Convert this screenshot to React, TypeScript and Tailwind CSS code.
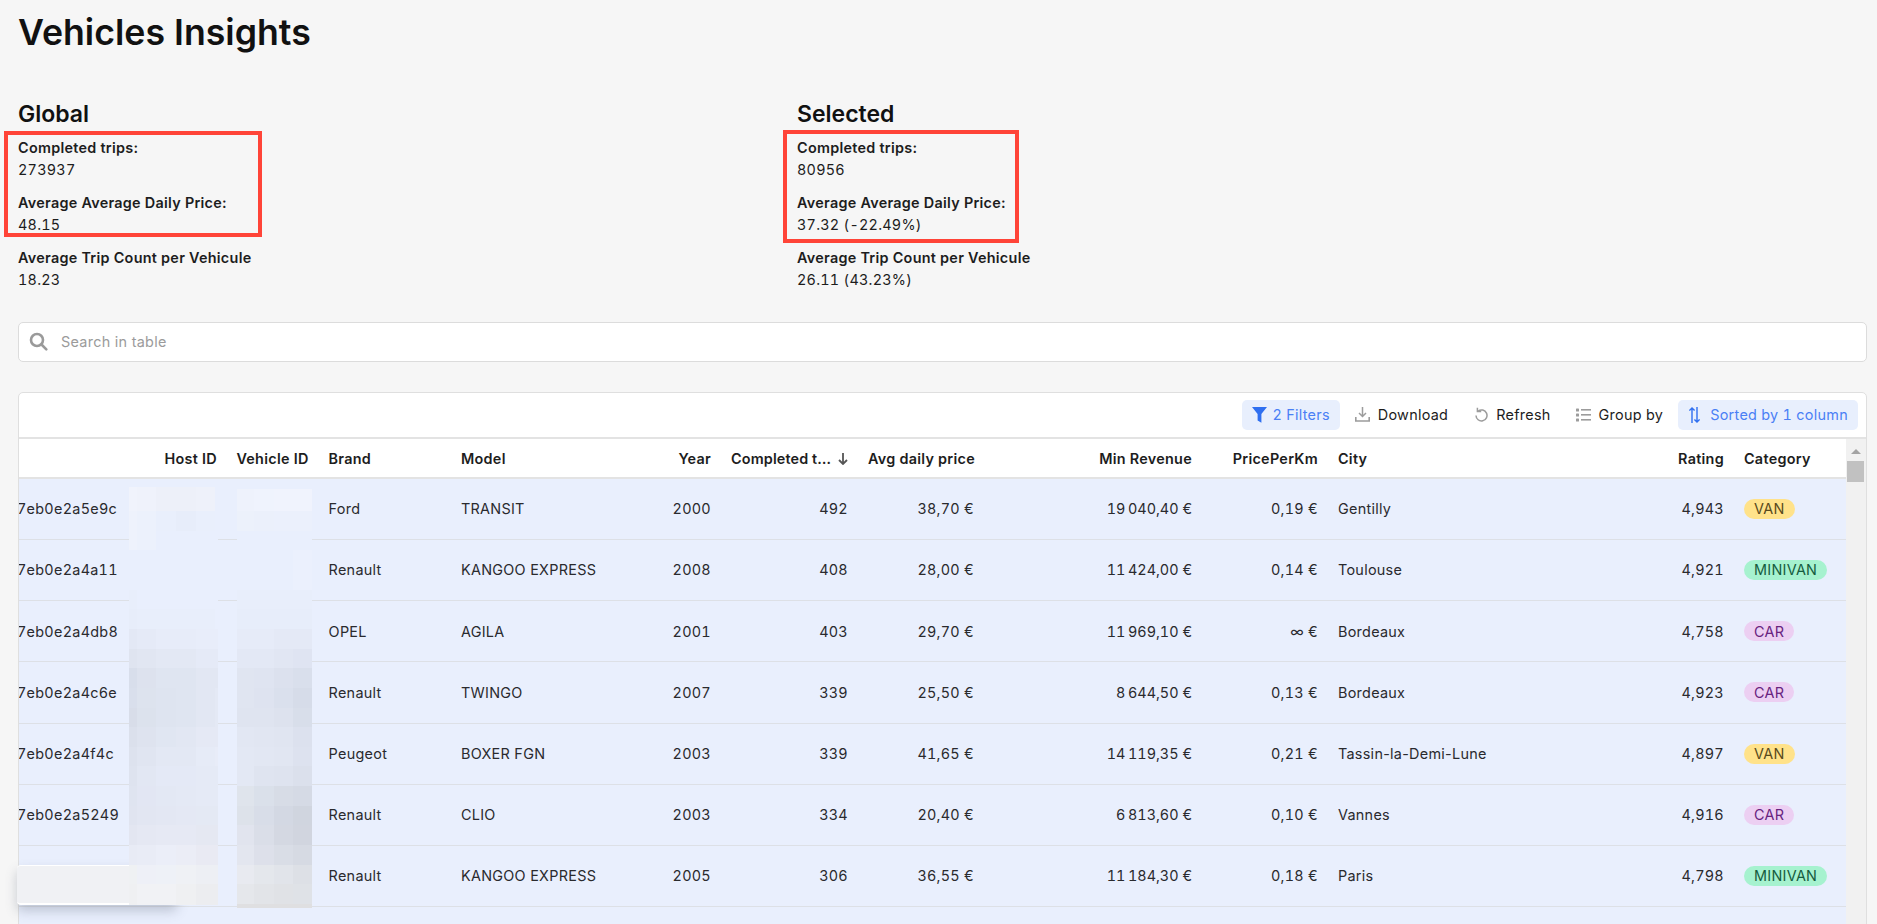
import React from "react";

const COLS =
  "grid grid-cols-[108px_100px_91.6px_132.4px_148px_122px_137px_126px_218px_126px_262px_144px_1fr]";

type Row = {
  id: string;
  brand: string;
  model: string;
  year: string;
  trips: string;
  avg: string;
  rev: string;
  ppk: string;
  city: string;
  rating: string;
  cat: "VAN" | "MINIVAN" | "CAR";
};

const rows: Row[] = [
  { id: "7eb0e2a5e9c", brand: "Ford", model: "TRANSIT", year: "2000", trips: "492", avg: "38,70 €", rev: "19\u202f040,40 €", ppk: "0,19 €", city: "Gentilly", rating: "4,943", cat: "VAN" },
  { id: "7eb0e2a4a11", brand: "Renault", model: "KANGOO EXPRESS", year: "2008", trips: "408", avg: "28,00 €", rev: "11\u202f424,00 €", ppk: "0,14 €", city: "Toulouse", rating: "4,921", cat: "MINIVAN" },
  { id: "7eb0e2a4db8", brand: "OPEL", model: "AGILA", year: "2001", trips: "403", avg: "29,70 €", rev: "11\u202f969,10 €", ppk: "∞ €", city: "Bordeaux", rating: "4,758", cat: "CAR" },
  { id: "7eb0e2a4c6e", brand: "Renault", model: "TWINGO", year: "2007", trips: "339", avg: "25,50 €", rev: "8\u202f644,50 €", ppk: "0,13 €", city: "Bordeaux", rating: "4,923", cat: "CAR" },
  { id: "7eb0e2a4f4c", brand: "Peugeot", model: "BOXER FGN", year: "2003", trips: "339", avg: "41,65 €", rev: "14\u202f119,35 €", ppk: "0,21 €", city: "Tassin-la-Demi-Lune", rating: "4,897", cat: "VAN" },
  { id: "7eb0e2a5249", brand: "Renault", model: "CLIO", year: "2003", trips: "334", avg: "20,40 €", rev: "6\u202f813,60 €", ppk: "0,10 €", city: "Vannes", rating: "4,916", cat: "CAR" },
  { id: "", brand: "Renault", model: "KANGOO EXPRESS", year: "2005", trips: "306", avg: "36,55 €", rev: "11\u202f184,30 €", ppk: "0,18 €", city: "Paris", rating: "4,798", cat: "MINIVAN" },
  { id: "", brand: "", model: "", year: "", trips: "", avg: "", rev: "", ppk: "", city: "", rating: "", cat: "CAR" },
];

function Badge({ cat }: { cat: Row["cat"] }) {
  if (cat === "VAN")
    return <span className="inline-flex h-5 items-center rounded-full bg-[#ffe28a] px-[10px] text-[#594a1c]">VAN</span>;
  if (cat === "MINIVAN")
    return <span className="inline-flex h-5 items-center rounded-full bg-[#a6f2cf] px-[10px] text-[#155c3e]">MINIVAN</span>;
  return <span className="inline-flex h-5 items-center rounded-full bg-[#eccff2] px-[10px] text-[#68237f]">CAR</span>;
}

function Stat({ label, value }: { label: string; value: string }) {
  return (
    <div className="mb-[11.8px] text-[14.4px] leading-[21.6px] text-[#1d1d1d]">
      <div className="font-semibold tracking-[0.28px]">{label}</div>
      <div className="tracking-[0.25px] tabular-nums">{value}</div>
    </div>
  );
}

const HOST_X = [0, 8, 27, 47, 67, 86, 89];
const HOST: string[][] = [
  ["#f0f3fc", "#eff2fb", "#edf0f9", "#edf0f9", "#eef1fa", "#e9effd"],
  ["#eef2fc", "#ecf1fc", "#e9effc", "#e7edfa", "#e9effc", "#e9effd"],
  ["#eef2fc", "#ecf1fc", "#e9effd", "#e9effd", "#e9effd", "#e9effd"],
  ["#e9effd", "#e9effd", "#e9effd", "#e9effd", "#e9effd", "#e9effd"],
  ["#e9effd", "#e9effd", "#e9effd", "#e9effd", "#e9effd", "#e9effd"],
  ["#e8eefb", "#e9effd", "#e9effd", "#e9effd", "#e9effd", "#e9effd"],
  ["#e7edfa", "#e8eefb", "#e8eefb", "#e8eefb", "#e8eefb", "#e9effd"],
  ["#e3e8f5", "#e5eaf7", "#e7ecf9", "#e7ecf9", "#e8edfa", "#e8edfa"],
  ["#dfe4f0", "#e1e6f2", "#e3e8f4", "#e3e8f4", "#e5eaf7", "#e5eaf7"],
  ["#d8deeb", "#dde2ee", "#dfe5f1", "#dfe5f1", "#e2e7f3", "#e2e7f3"],
  ["#d9dfec", "#dde3ee", "#dee4f0", "#dfe5f1", "#e2e7f3", "#e4e9f5"],
  ["#d8dde9", "#dce2ed", "#dee4f0", "#dfe5f1", "#e2e7f3", "#e4e9f5"],
  ["#dbe0ec", "#dee3ef", "#e0e6f2", "#e2e7f3", "#e5e9f5", "#e5e9f5"],
  ["#dde2ee", "#e0e5f1", "#e3e8f4", "#e3e8f4", "#e6ebf7", "#e8ecf8"],
  ["#dee3ef", "#e2e7f3", "#e4e9f6", "#e4e9f6", "#e5eaf6", "#e5eaf6"],
  ["#dfe4f0", "#e2e6f3", "#e3e8f4", "#e4e9f5", "#e5eaf6", "#e5eaf6"],
  ["#e0e4f0", "#e2e6f2", "#e3e7f3", "#e4e8f4", "#e4e9f4", "#e4e9f4"],
  ["#e3e6f1", "#e5e8f3", "#e6e9f4", "#e6e9f4", "#e5e8f2", "#e5e8f2"],
  ["#e8ebf5", "#e9ecf6", "#ebeef8", "#ebedf6", "#e9eaf3", "#e9eaf3"],
  ["#eff1f3", "#eef0f7", "#eef1f7", "#eff1f5", "#edeff4", "#edeff4"],
  ["#eff0f2", "#f1f2f5", "#f1f2f5", "#eff0f2", "#ecedf0", "#ecedf0"],
];
const VEH_X = [0, 17, 37, 56, 75];
const VEH: string[][] = [
  ["#eef2fc", "#eff3fd", "#f0f3fd", "#f0f3fd"],
  ["#ecf1fb", "#ebf0fb", "#ebf0fc", "#ebf0fc"],
  ["#e9effd", "#e9effd", "#e9effd", "#e9effd"],
  ["#e9effd", "#e9effd", "#e9effd", "#ebf0fd"],
  ["#e9effd", "#e9effd", "#e9effd", "#ebf0fd"],
  ["#e8eefb", "#e8eefb", "#e8eefb", "#e8eefb"],
  ["#e7edfa", "#e7edfa", "#e7edfa", "#e7edfa"],
  ["#e6ebf8", "#e6ebf8", "#e4e9f6", "#e4e9f6"],
  ["#e3e8f5", "#e3e8f5", "#e1e6f3", "#dfe4f2"],
  ["#e0e5f1", "#dfe4f1", "#dce1ee", "#d9dfec"],
  ["#e0e5f1", "#dee3f0", "#dae0ed", "#d6dce9"],
  ["#dfe4f0", "#dfe4f0", "#dde2ee", "#d8deea"],
  ["#e2e7f3", "#e1e6f2", "#e0e5f1", "#dce1ee"],
  ["#e3e8f4", "#e2e7f3", "#e1e6f2", "#dde2ef"],
  ["#e3e8f4", "#dfe4f0", "#dee3ef", "#dbe0ec"],
  ["#dfe4ec", "#dae0ea", "#d7dce6", "#d5dae5"],
  ["#dde2ea", "#d8dde8", "#d3d8e3", "#d0d5df"],
  ["#e1e4ee", "#dadee8", "#d4d8e2", "#d1d5df"],
  ["#e3e6ef", "#dde0ea", "#d9dde6", "#d6dae3"],
  ["#e8eaf0", "#e4e7ec", "#e1e4ea", "#dde0e6"],
  ["#e5e7eb", "#e2e4e8", "#e0e2e6", "#dfe2e7"],
  ["#dfdfe1", "#dfdfe1", "#dfdfe1", "#dfdfe1"],
];

const STEP = 19.65;

function Mosaic({ xs, data, top, height, className }: { xs: number[]; data: string[][]; top: number; height: number; className: string }) {
  const w = xs[xs.length - 1];
  return (
    <svg className={className} width={w} height={height} viewBox={`0 0 ${w} ${height}`} shapeRendering="crispEdges">
      {data.map((r, i) =>
        r.map((c, j) => (
          <rect
            key={`${i}-${j}`}
            x={xs[j]}
            y={i === 0 ? 0 : top + i * STEP}
            width={xs[j + 1] - xs[j]}
            height={i === 0 ? top + STEP : STEP + 0.5}
            fill={c}
          />
        ))
      )}
    </svg>
  );
}

export default function App() {
  return (
    <div className="relative h-[924px] overflow-hidden bg-[#f6f6f6] pl-[18px] pr-[10px] font-['Inter',sans-serif] text-[#1d1d1d]">
      <h1 className="pt-[6px] text-[35.7px] font-semibold leading-[52px] text-[#111111]">Vehicles Insights</h1>

      <div className="mt-[43px] flex">
        <div className="w-[779px]">
          <h2 className="mb-[10px] text-[23px] font-semibold leading-[26px] text-[#111111]">Global</h2>
          <Stat label="Completed trips:" value="273937" />
          <Stat label="Average Average Daily Price:" value="48.15" />
          <Stat label="Average Trip Count per Vehicule" value="18.23" />
        </div>
        <div>
          <h2 className="mb-[10px] text-[23px] font-semibold leading-[26px] text-[#111111]">Selected</h2>
          <Stat label="Completed trips:" value="80956" />
          <Stat label="Average Average Daily Price:" value="37.32 (-22.49%)" />
          <Stat label="Average Trip Count per Vehicule" value="26.11 (43.23%)" />
        </div>
      </div>

      <div className="mt-[20px] flex h-[40px] items-center rounded-[5px] border border-[#dcdcdc] bg-white pl-[10px] text-[14.4px] tracking-[0.28px] text-[#9b9b9b]">
        <svg width="19" height="19" viewBox="0 0 19 19" fill="none" stroke="#9a9a9a" strokeWidth="2.6" strokeLinecap="round">
          <circle cx="8" cy="8" r="6" />
          <path d="M12.5 12.5 17.3 17.3" />
        </svg>
        <span className="ml-[13px]">Search in table</span>
      </div>

      <div className="mt-[30px] rounded-t-[5px] border border-[#dfdfdf] bg-white tracking-[0.28px]">
        <div className="flex h-[46px] items-center justify-end gap-[5px] border-b-2 border-[#e3e3e3] pr-[8px] text-[14.4px] tabular-nums">
          <div className="flex h-[30px] items-center gap-[5px] rounded-[5px] bg-[#e8effd] pl-[10px] pr-[10px] text-[#4a80f5]">
            <svg width="15" height="16" viewBox="0 0 15 16" fill="#2f6ff0">
              <path d="M0 0H15L9.4 7V15.8L5.6 13.4V7Z" />
            </svg>
            <span>2 Filters</span>
          </div>
          <div className="flex h-[30px] items-center gap-[8px] px-[10px] text-[#1d1d1d]">
            <svg width="15" height="15" viewBox="0 0 15 15" fill="none" stroke="#9c9c9c" strokeWidth="1.5">
              <path d="M7.5 0V9M4 6l3.5 3.5L11 6" />
              <path d="M0.8 10V14H14.2V10" strokeWidth="1.6" />
            </svg>
            <span>Download</span>
          </div>
          <div className="ml-[2px] flex h-[30px] items-center gap-[8px] px-[10px] text-[#1d1d1d]">
            <svg width="13" height="15" viewBox="0 0 13 15" fill="none" stroke="#9c9c9c" strokeWidth="1.5">
              <path d="M3.2 4A5.5 5.5 0 1 1 1 8.5" />
              <path d="M2.4 0.8V4.6H6.2" />
            </svg>
            <span>Refresh</span>
          </div>
          <div className="flex h-[30px] items-center gap-[8px] px-[10px] text-[#1d1d1d]">
            <svg width="15" height="14" viewBox="0 0 15 14" fill="#9c9c9c">
              <rect x="0" y="0.5" width="3" height="3" rx="0.6" />
              <rect x="0" y="5.5" width="3" height="3" rx="0.6" />
              <rect x="0" y="10.5" width="3" height="3" rx="0.6" />
              <rect x="5" y="1" width="10" height="1.6" />
              <rect x="5" y="6" width="10" height="1.6" />
              <rect x="5" y="11" width="10" height="1.6" />
            </svg>
            <span>Group by</span>
          </div>
          <div className="flex h-[30px] items-center gap-[10px] rounded-[5px] bg-[#e8effd] pl-[11px] pr-[10px] text-[#4a80f5]">
            <svg width="11" height="16" viewBox="0 0 11 16" fill="none" stroke="#2f6ff0" strokeWidth="1.4">
              <path d="M3 16V1M0.4 3.6 3 1 5.6 3.6" />
              <path d="M8 0V15M5.4 12.4 8 15 10.6 12.4" />
            </svg>
            <span>Sorted by 1 column</span>
          </div>
        </div>

        <div className="flex">
          <div className="w-[1827px] text-[14.4px]">
            <div className={`${COLS} h-[40px] items-center border-b-2 border-[#e3e3e3] pt-[2px] font-semibold text-[#1d1d1d]`}>
              <div />
              <div className="whitespace-nowrap px-[10px] text-right">Host ID</div>
              <div className="whitespace-nowrap pr-[10px] text-right">Vehicle ID</div>
              <div className="px-[10px]">Brand</div>
              <div className="px-[10px]">Model</div>
              <div className="px-[10px] text-right">Year</div>
              <div className="flex items-center gap-[4px] px-[10px]">
                <span className="min-w-0 flex-1 truncate tracking-[0.15px]">Completed trips</span>
                <svg className="shrink-0" width="10" height="12" viewBox="0 0 10 12" fill="none" stroke="#555555" strokeWidth="1.8">
                  <path d="M5 0V11M1 7l4 4 4-4" />
                </svg>
              </div>
              <div className="whitespace-nowrap px-[10px] text-right">Avg daily price</div>
              <div className="px-[10px] text-right">Min Revenue</div>
              <div className="px-[10px] text-right">PricePerKm</div>
              <div className="px-[10px]">City</div>
              <div className="px-[10px] text-right">Rating</div>
              <div className="px-[10px]">Category</div>
            </div>

            {rows.map((r, i) => (
              <div
                key={i}
                className={`${COLS} box-border h-[61.15px] items-center border-b border-[#dde0e6] bg-[#e9effd] text-[#2a2a2e] ${
                  i === 1 || i === 5 ? "shadow-[0_1px_0_#ffffff]" : ""
                }`}
              >
                <div className="overflow-hidden whitespace-nowrap tabular-nums [text-indent:-2px]">{r.id}</div>
                <div />
                <div />
                <div className="px-[10px]">{r.brand}</div>
                <div className="whitespace-nowrap px-[10px]">{r.model}</div>
                <div className="px-[10px] text-right tabular-nums">{r.year}</div>
                <div className="px-[10px] text-right tabular-nums">{r.trips}</div>
                <div className="px-[10px] text-right tabular-nums">{r.avg}</div>
                <div className="px-[10px] text-right tabular-nums">{r.rev}</div>
                <div className="px-[10px] text-right tabular-nums">{r.ppk}</div>
                <div className="px-[10px]">{r.city}</div>
                <div className="px-[10px] text-right tabular-nums">{r.rating}</div>
                <div className="px-[10px]">{r.brand ? <Badge cat={r.cat} /> : null}</div>
              </div>
            ))}
          </div>

          <div className="relative h-[500px] flex-1 bg-[#f1f1f1]">
            <div className="absolute left-[5px] top-[10px] h-0 w-0 border-x-[5px] border-b-[5px] border-x-transparent border-b-[#a3a3a3]" />
            <div className="absolute left-[1px] right-[2px] top-[22px] h-[21px] bg-[#c1c1c1]" />
          </div>
        </div>
      </div>

      {/* red annotation boxes drawn over the stats */}
      <div className="absolute left-[4px] top-[131px] h-[106px] w-[258px] border-4 border-[#ff4438]" />
      <div className="absolute left-[783px] top-[130px] h-[113px] w-[236px] border-4 border-[#ff4438]" />

      {/* pixelated redactions and blurred toast */}
      <div className="absolute left-[17px] top-[865px] h-[40px] w-[160px] rounded-[4px] border-b-2 border-t border-white bg-[#f0f1f4] shadow-[0_6px_12px_rgba(90,100,120,0.3)]" />
      <Mosaic className="absolute left-[129px] top-[487px]" xs={HOST_X} data={HOST} top={4.35} height={418} />
      <Mosaic className="absolute left-[237px] top-[489px]" xs={VEH_X} data={VEH} top={2.35} height={419} />
    </div>
  );
}
